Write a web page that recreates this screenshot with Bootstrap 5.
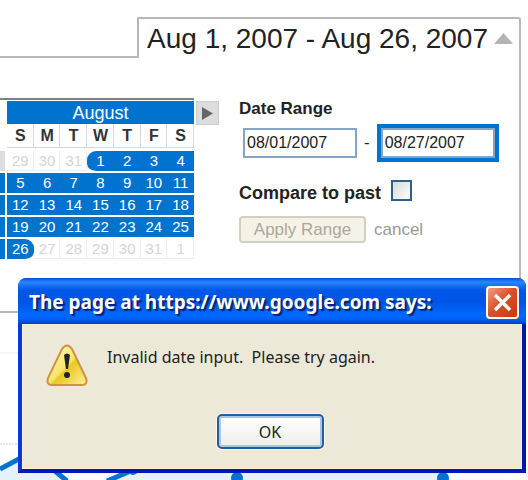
<!DOCTYPE html>
<html lang="en">
<head>
<meta charset="utf-8">
<meta name="viewport" content="width=device-width, initial-scale=1">
<title>Date range</title>
<link href="https://cdn.jsdelivr.net/npm/bootstrap@5.3.0/dist/css/bootstrap.min.css" rel="stylesheet">
<style>
body{font-family:"Liberation Sans",Arial,sans-serif;background:#fff;color:#222;overflow:hidden}
.page-area{min-height:100vh;padding:17px 7px 0 0}
.tab-rest{border-bottom:2px solid #b8b8b8}
.range-tab{border:2px solid #b8b8b8;border-bottom:0;border-top-right-radius:3px;padding:0 6px 0 8px;height:41px;font-size:28px;line-height:40px;gap:6px;background:none;color:#222}
.range-body{border-right:2px solid #b8b8b8;border-bottom:2px solid #b8b8b8;padding:40px 0 50px}
.months{border-top:2px solid #857f7f;padding-top:1px;gap:2px;width:194px}
.prev-month{width:5px;padding-top:50px;gap:2px}
.prev-month span{height:20px;background:#0073cf}
.prev-month .faded{background:#ddd}
.cal{border-collapse:separate;border-spacing:0;table-layout:fixed;text-align:center;line-height:20px}
.cal caption{caption-side:top;background:#0073cf;color:#fff;font-size:18px;line-height:24px;height:23px;padding:0;text-align:center}
.cal th{height:27px;border-bottom:3px solid #fff;font-size:16px;line-height:22px;color:#333;padding:0;box-shadow:inset -1px -1px #d8d8d8}
.cal td{height:22px;padding:0;font-size:15px;border-bottom:2px solid #fff;background:#0073cf;background-clip:padding-box;color:#fff}
.cal td.out{background:#fff;color:#d4d4d4;box-shadow:inset -1px -1px #eee}
.cal .first{border-radius:9px 0 0 9px}
.cal .last{border-radius:0 9px 9px 0}
.next-btn{width:23px;height:24px;margin:3px 0 0 2px;background:#ddd;border:1px solid #ccc}
.range-form{margin-left:20px;font-size:17px;line-height:22px}
.range-form legend{font-size:17px;font-weight:700;line-height:22px;color:#222}
.range-form label{font-size:18px;font-weight:700;line-height:26px;color:#222}
.date-box{width:114px;height:30px;border:2px solid #86a4c4;font-size:16px;padding:0 2px 1px;color:#222;background:#fff}
.active-ring{background:#0073cf;padding:4px}
.dates{padding-left:4px;gap:7px}
.past-row{margin-top:18px;gap:10px}
.past-box{width:21px;height:21px;border:2px solid #2e5f91;appearance:none;background:linear-gradient(135deg,#d8d8d4,#fff)}
.apply-row{margin-top:10px}
.apply-btn{height:27px;width:127px;border:2px solid #d4d0c0;border-radius:4px;background:#f5f3e8;color:#aaa79b;font-size:17px;line-height:22px}
.cancel-link{color:#999;font-size:17px}
.graph{height:168px}
.alert-window{left:18px;right:2px;top:278px;height:195px;background:#ece9d8;border:4px solid #0838dc;border-top:0;border-right-color:#0018a8;border-bottom-color:#0018b8;border-radius:9px 9px 0 0;box-shadow:inset 0 0 0 1px #fff3d4;font-family:"Noto Sans",sans-serif}
.alert-head{margin:0 -4px;height:46px;padding:2px 7px 0 11px;border-radius:8px 8px 0 0;background:linear-gradient(#0848d8,#2888ff 4px,#0058e8 12px,#0054e4 24px,#0068ff 36px,#0062fa 41px,#003cc8);color:#fff}
.alert-head h1{font:700 19px/32px "Noto Sans",sans-serif;text-shadow:2px 2px 1px #082070}
.close-btn{width:33px;height:33px;border:2px solid #fff;border-radius:4px;background:linear-gradient(135deg,#f0a088,#e05028 45%,#c83808)}
.alert-text{gap:19px;padding:20px 24px 0;font-size:16px;line-height:26px;color:#222;white-space:pre}
.alert-actions{margin-top:28px;padding-right:4px}
.ok-btn{width:107px;height:35px;border:2px solid #265b9c;border-radius:5px;background:linear-gradient(#fff,#efeee9);box-shadow:inset 0 0 0 2px #a9c5ed,0 0 0 1px #fff8e8;font-size:16px;line-height:28px;color:#222}
</style>
<script src="https://cdn.jsdelivr.net/npm/bootstrap@5.3.0/dist/js/bootstrap.bundle.min.js"></script>
</head>
<body>
<div class="position-relative page-area">
  <div class="d-flex">
    <div class="tab-rest flex-grow-1"></div>
    <button type="button" class="range-tab d-flex align-items-center">Aug 1, 2007 - Aug 26, 2007
      <svg width="19" height="12" viewBox="0 0 19 12" aria-hidden="true"><path d="M9.500 0 19 11H0Z" fill="#b4b4b4"/></svg></button>
  </div>
  <main class="range-body d-flex align-items-start">
    <div class="months d-flex">
      <div class="prev-month d-flex flex-column"><span class="faded"></span><span></span><span></span><span></span><span></span></div>
      <table class="cal flex-grow-1">
        <caption>August</caption>
        <thead><tr><th>S</th><th>M</th><th>T</th><th>W</th><th>T</th><th>F</th><th>S</th></tr></thead>
        <tbody>
          <tr><td class="out">29</td><td class="out">30</td><td class="out">31</td><td class="first">1</td><td>2</td><td>3</td><td>4</td></tr>
          <tr><td>5</td><td>6</td><td>7</td><td>8</td><td>9</td><td>10</td><td>11</td></tr>
          <tr><td>12</td><td>13</td><td>14</td><td>15</td><td>16</td><td>17</td><td>18</td></tr>
          <tr><td>19</td><td>20</td><td>21</td><td>22</td><td>23</td><td>24</td><td>25</td></tr>
          <tr><td class="last">26</td><td class="out">27</td><td class="out">28</td><td class="out">29</td><td class="out">30</td><td class="out">31</td><td class="out">1</td></tr>
        </tbody>
      </table>
    </div>
    <button type="button" class="next-btn d-flex align-items-center justify-content-center p-0" aria-label="Next month"><svg width="11" height="13" viewBox="0 0 11 13"><path d="M0 0 11 6.500 0 13Z" fill="#666"/></svg></button>
    <form class="range-form">
      <fieldset>
        <legend class="float-none mb-1">Date Range</legend>
        <div class="dates d-flex align-items-center">
          <input class="date-box" type="text" value="08/01/2007" aria-label="Start date"><span>-</span>
          <div class="active-ring d-flex"><input class="date-box" type="text" value="08/27/2007" aria-label="End date"></div>
        </div>
      </fieldset>
      <div class="past-row d-flex align-items-start"><label for="past">Compare to past</label><input id="past" class="past-box" type="checkbox"></div>
      <div class="apply-row d-flex align-items-center gap-2"><button type="button" class="apply-btn p-0" disabled>Apply Range</button><a href="#" class="cancel-link text-decoration-none">cancel</a></div>
    </form>
  </main>
  <svg class="graph d-block w-100" viewBox="0 0 521 168" preserveAspectRatio="xMinYMin slice" aria-hidden="true">
    <path d="M0 40H18" stroke="#eee"/><path d="M0 131H521" stroke="#ccc" stroke-dasharray="2 1"/>
    <path d="M0 156 32 139 67 168H0ZM107 168 133 158H443L450 168Z" fill="#e5f2fb"/>
    <path d="M0 156 32 139 67 168M107 168 133 157" fill="none" stroke="#0073cf" stroke-width="5"/>
    <g fill="#0073cf"><circle cx="133" cy="157" r="5"/><circle cx="237" cy="165" r="6"/><circle cx="443" cy="165" r="6"/></g>
  </svg>
  <section class="alert-window position-absolute" role="alertdialog" aria-labelledby="alert-title">
    <header class="alert-head d-flex align-items-center justify-content-between"><h1 id="alert-title" class="m-0">The page at https://www.google.com says:</h1>
      <button type="button" class="close-btn p-0 d-flex align-items-center justify-content-center" aria-label="Close"><svg width="19" height="19" viewBox="0 0 19 19"><path d="M2 2 17 17M17 2 2 17" stroke="#fff" stroke-width="3.500"/></svg></button></header>
    <div class="alert-text d-flex"><svg width="42" height="42" viewBox="0 0 42 42" aria-hidden="true"><defs><linearGradient id="warn" x1="0" y1="0" x2="1" y2="1"><stop offset="0" stop-color="#fffbd0"/><stop offset=".5" stop-color="#f8e468"/><stop offset=".55" stop-color="#eac820"/><stop offset="1" stop-color="#fff0a0"/></linearGradient></defs><path d="M16 5Q21-2 26 5L40 34Q42 41 36 41H6Q0 41 2 34Z" fill="url(#warn)" stroke="#d0923c" stroke-width="2"/><path d="M18 11Q21 8 24 11L22 25H20Z" fill="#222"/><circle cx="21" cy="31" r="3" fill="#222"/></svg><span>Invalid date input.  Please try again.</span></div>
    <div class="alert-actions d-flex justify-content-center"><button type="button" class="ok-btn p-0">OK</button></div>
  </section>
</div>
</body>
</html>
